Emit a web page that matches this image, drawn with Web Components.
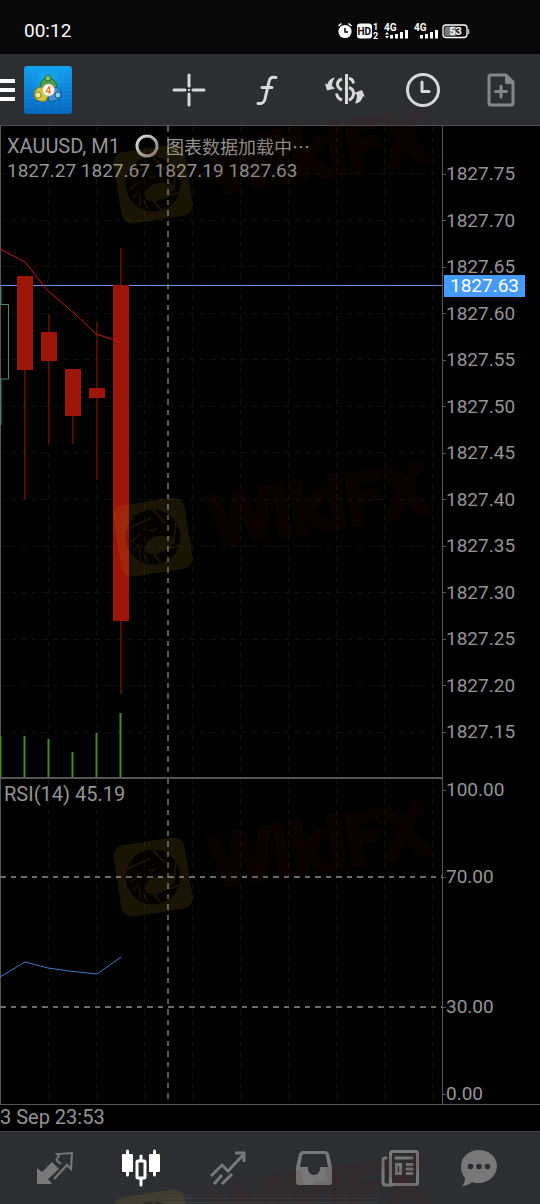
<!DOCTYPE html>
<html lang="zh-CN">
<head>
<meta charset="utf-8">
<meta name="viewport" content="width=device-width, initial-scale=1">
<title>XAUUSD, M1</title>
<style>
  body {
    margin: 0;
    background: #000;
    color: #949494;
    font-family: Roboto, "Noto Sans CJK SC", sans-serif;
    font-size: 19px;
    line-height: 20px;
  }
</style>
</head>
<body>
<trade-app>
  <phone-status slot="status" time="00:12" battery="53"></phone-status>
  <chart-toolbar slot="toolbar"></chart-toolbar>
  <price-chart slot="chart" time="3 Sep 23:53">
    <span slot="symbol">XAUUSD, M1</span>
    <span slot="loading">图表数据加载中…</span>
    <span slot="ohlc">1827.27 1827.67 1827.19 1827.63</span>
    <span slot="rsi">RSI(14) 45.19</span>
  </price-chart>
  <tab-bar slot="tabs"></tab-bar>
  <wiki-mark slot="marks" y="184"></wiki-mark>
  <wiki-mark slot="marks" y="537"></wiki-mark>
  <wiki-mark slot="marks" y="877"></wiki-mark>
  <wiki-mark slot="marks" y="1229"></wiki-mark>
</trade-app>

<script>
class TradeApp extends HTMLElement {
  connectedCallback() {
    this.attachShadow({ mode: 'open' });
    this.shadowRoot.innerHTML = `
      <style>
        :host {
          display: flex;
          flex-direction: column;
          position: relative;
          height: 100vh;
          overflow: hidden;
        }
        .overlay {
          position: absolute;
          inset: 0;
          overflow: hidden;
          pointer-events: none;
        }
      </style>
      <slot name="status"></slot>
      <slot name="toolbar"></slot>
      <slot name="chart"></slot>
      <slot name="tabs"></slot>
      <div class="overlay"><slot name="marks"></slot></div>
    `;
  }
}

class PhoneStatus extends HTMLElement {
  connectedCallback() {
    this.attachShadow({ mode: 'open' });
    this.shadowRoot.innerHTML = `
      <style>
        :host {
          display: flex;
          justify-content: space-between;
          align-items: center;
          box-sizing: border-box;
          height: 54px;
          padding: 8px 68px 0 24px;
          background: #080808;
          color: #fff;
        }
        .icons { display: flex; align-items: center; }
        svg { display: block; fill: #fff; }
        text { font-family: Roboto, sans-serif; font-weight: 700; }
      </style>
      <time>${this.getAttribute('time')}</time>
      <div class="icons">
        <svg width="134" height="18" viewBox="0 0 134 18">
          <!-- alarm -->
          <circle cx="7" cy="9.500" r="6.600"/>
          <path d="M.5 4 3.500 1.500M13.500 4 10.500 1.500" stroke="#fff" stroke-width="1.600"/>
          <path d="M7 6v4h3" fill="none" stroke="#080808" stroke-width="1.500"/>
          <!-- HD voice -->
          <rect x="19" y="1.500" width="15" height="15" rx="3"/>
          <text x="19.500" y="13" font-size="10" fill="#080808">HD</text>
          <text x="35" y="8" font-size="9">1</text>
          <text x="35" y="17" font-size="9">2</text>
          <!-- sim 1 -->
          <text x="46" y="9" font-size="10">4G</text>
          <path d="M47 12.500 49 10l2 2.500zM47 14 49 16.500 51 14z"/>
          <path d="M52 13h3v3.500h-3zM57 12h3v4.500h-3zM62 10h3v6.500h-3zM67 8h3v8.500h-3z"/>
          <!-- sim 2 -->
          <text x="76" y="9" font-size="10">4G</text>
          <path d="M82 13h3v3.500h-3zM87 12h3v4.500h-3zM92 10h3v6.500h-3zM97 8h3v8.500h-3z"/>
          <!-- battery -->
          <rect x="105" y="3" width="24" height="12.500" rx="3" fill="none" stroke="#fff" stroke-width="1.300"/>
          <rect x="106.500" y="4.500" width="12" height="9.500" rx="1.500" fill="#777"/>
          <path d="M130.500 7v5" stroke="#bbb" stroke-width="1.500"/>
          <text x="117.500" y="13" font-size="11" text-anchor="middle">${this.getAttribute('battery')}</text>
        </svg>
      </div>
    `;
  }
}

class ChartToolbar extends HTMLElement {
  connectedCallback() {
    this.attachShadow({ mode: 'open' });
    this.shadowRoot.innerHTML = `
      <style>
        :host {
          display: flex;
          align-items: center;
          height: 71px;
          background: #2d2e32;
          color: #d8d8d8;
        }
        button {
          display: flex;
          justify-content: center;
          align-items: center;
          width: 78px;
          height: 71px;
          padding: 0;
          border: 0;
          background: none;
          color: inherit;
        }
        button:disabled { color: #868686; }
        .menu { width: 24px; justify-content: flex-start; }
        .logo { width: 48px; margin-right: auto; }
        svg { display: block; fill: none; stroke: currentColor; stroke-width: 3; }
      </style>
      <button class="menu" aria-label="Menu">
        <svg width="15" height="22" viewBox="0 0 15 22" style="stroke:#fff;stroke-width:4"><path d="M0 2h15M0 11h15M0 20h15"/></svg>
      </button>
      <button class="logo" aria-label="Accounts">
        <svg width="48" height="48" viewBox="0 0 48 48" style="stroke-width:1">
          <defs>
            <linearGradient id="bg" x2="0" y2="1"><stop stop-color="#12a0ef"/><stop offset="1" stop-color="#0767bf"/></linearGradient>
            <radialGradient id="glow"><stop stop-color="#12c4f8" stop-opacity=".8"/><stop offset="1" stop-color="#12a0ef" stop-opacity="0"/></radialGradient>
          </defs>
          <g stroke="none">
            <rect width="48" height="48" rx="3" fill="url(#bg)"/>
            <circle cx="24" cy="15" r="17" fill="url(#glow)"/>
          </g>
          <path d="M8 0v48M16 0v48M24 0v48M32 0v48M40 0v48M0 8h48M0 16h48M0 24h48M0 32h48M0 40h48" stroke="#fff" stroke-opacity=".04"/>
          <path d="M16 22c0-6 3-10 8-10s9 4 9 10l-4 4H18z" fill="#4f9f48" stroke="#266b37"/>
          <circle cx="24" cy="12" r="3" fill="#7cc262" stroke="#266b37"/>
          <path d="M16 21c-4 1-6 5-6 9 2 5 7 6 12 5l2-5-4-8z" fill="#d3c23c" stroke="#7f7a27"/>
          <circle cx="14" cy="29" r="3" fill="#f3ed96" stroke="#8d8527"/>
          <path d="M32 21c4 2 6 6 5 10-3 4-9 5-13 4l1-7z" fill="#3f8fd0" stroke="#145993"/>
          <circle cx="34" cy="29" r="3" fill="#8bcdf0" stroke="#145993"/>
          <circle cx="24.500" cy="24" r="6" fill="#fff" stroke="#c8bfa4"/>
          <text x="24.500" y="28" text-anchor="middle" stroke="none" fill="#ef7e2c" font-family="Roboto, sans-serif" font-weight="700" font-size="11">4</text>
        </svg>
      </button>
      <button aria-label="Crosshair">
        <svg width="34" height="34" viewBox="0 0 34 34" stroke-linecap="round"><path d="M17 2v11M17 21v11M2 17h11M21 17h11"/><path d="M16 17h2" stroke-linecap="butt" style="stroke-width:2"/></svg>
      </button>
      <button aria-label="Indicators">
        <svg width="24" height="34" viewBox="0 0 24 34" stroke-linecap="round"><path d="M21 4.500c-4-1-6 0-7 4L10 26c-1 4-3 5-7 4.500M7 14.500h10"/></svg>
      </button>
      <button aria-label="Symbols">
        <svg width="42" height="34" viewBox="0 0 42 34">
          <path d="M22.500 1v30"/>
          <path d="M18 6c-6 2-6 8 0 11M12.500 20.500c1 4 2 5 5.500 6.500M25 5.500c2 0 4 2 4.500 5M25 14.500c6 2 6 10 0 12.500"/>
          <path d="M11 4.500C7 5 4 8 3.500 11.500L1 10.500 3 17.500l8-2-3-2.500c0-3 1-6 3-8.500zM31 30.500c4 0 7-3 8-7.500l2 1-3-7-8 3 3 2c0 3-1 6-2 8.500z" fill="currentColor" stroke="none"/>
        </svg>
      </button>
      <button aria-label="Timeframe">
        <svg width="34" height="34" viewBox="0 0 34 34"><circle cx="17" cy="17" r="15.500"/><path d="M16 9v9.500h7" stroke-linejoin="round" stroke-linecap="round"/></svg>
      </button>
      <button disabled aria-label="New order">
        <svg width="28" height="34" viewBox="0 0 28 34"><path d="M4 2h15l7 7v21a2 2 0 0 1-2 2H4a2 2 0 0 1-2-2V4a2 2 0 0 1 2-2z" stroke-linejoin="round"/><path d="M18 2v7a2 2 0 0 0 2 2h7z" fill="currentColor" stroke="none"/><path d="M14 13v11M8.500 18.500h11" stroke-linecap="round"/></svg>
      </button>
    `;
  }
}

class PriceChart extends HTMLElement {
  constructor() {
    super();
    this.prices = ['1827.75', '1827.70', '1827.65', '1827.60', '1827.55', '1827.50', '1827.45',
      '1827.40', '1827.35', '1827.30', '1827.25', '1827.20', '1827.15'];
    // x, wick top, body top, body bottom, wick bottom
    this.candles = [
      [25, 150, 150, 244, 374],
      [49, 188, 206, 235, 318],
      [73, 243, 243, 290, 318],
      [97, 196, 262, 272, 354],
      [121, 122, 159, 495, 568]
    ];
    this.volumes = [[1, 610], [25, 610], [49, 613], [73, 626], [97, 607], [121, 587]];
  }

  verticals(height) {
    let out = '';
    for (let x = 48; x < 442; x += 48) {
      out += `<path class="grid" d="M${x + 0.5} 0V${height}"/>`;
    }
    return `${out}<path class="period" d="M168 0V${height}"/>`;
  }

  connectedCallback() {
    const rows = this.prices.map((p, i) => `<path class="grid" d="M0 ${Math.round(47 + i * 46.58) + 0.5}H442"/>`).join('');
    const candles = this.candles.map(([x, high, top, bottom, low]) => `
      <path class="wick" d="M${x} ${high}V${low}"/>
      <rect class="body" x="${x - 8}" y="${top}" width="16" height="${bottom - top}"/>`).join('');
    const volumes = this.volumes.map(([x, top]) => `<path class="volume" d="M${x - 0.5} ${top}V652"/>`).join('');

    this.attachShadow({ mode: 'open' });
    this.shadowRoot.innerHTML = `
      <style>
        :host {
          display: flex;
          flex-direction: column;
          flex: 1;
          min-height: 0;
          border-top: 1px solid #505052;
          background: #000;
        }
        .pane {
          display: flex;
          position: relative;
          flex: 2 1 0;
          min-height: 0;
        }
        .pane.rsi { flex-grow: 1; }
        .plot {
          display: block;
          flex: 1;
          min-width: 0;
          height: 100%;
          fill: none;
        }
        .axis {
          display: flex;
          flex-direction: column;
          justify-content: space-between;
          box-sizing: border-box;
          width: 98px;
          margin: 0;
          padding: 38px 0 36px;
          border-left: 1px solid #555;
          list-style: none;
        }
        .rsi .axis { padding: 2px 0 0; }
        .axis li { display: flex; align-items: center; height: 20px; }
        .axis li::before { content: ""; width: 3px; height: 1px; background: #555; }
        .axis .gap { flex: 67 1 0; height: auto; }
        .axis .gap.wide { flex-grow: 110; }
        .axis .gap::before { content: none; }
        .legend {
          position: absolute;
          top: 8px;
          left: 7px;
          line-height: 25px;
        }
        .rsi .legend { top: 4px; left: 4px; font-size: 20px; }
        .row { display: flex; align-items: center; height: 24px; font-size: 20px; }
        .row svg { margin: 0 7px 0 15px; }
        .loading { font-size: 18px; font-family: "Noto Sans CJK SC", sans-serif; }
        .price {
          position: absolute;
          top: calc(24.5% - 11px);
          right: 15px;
          width: 81px;
          height: 22px;
          line-height: 22px;
          background: #459bfb;
          color: #fff;
          text-align: center;
        }
        .times { padding: 3px 0 4px; border-top: 1px solid #555; font-size: 20px; line-height: 19px; }
        .grid { stroke: #101010; stroke-dasharray: 6 5 5 5; }
        .period { stroke: #585858; stroke-width: 2; stroke-dasharray: 6 5 5 5; }
        .level { stroke: #6c6c6c; stroke-width: 2; stroke-dasharray: 6 5 5 5; }
        .edge { stroke: #555; stroke-width: 2; }
        .wick { stroke: #4a0f08; stroke-width: 2; }
        .body { fill: #9c1506; }
        .volume { stroke: #4b8a20; stroke-width: 2; }
        .bull { stroke: #4f8a68; stroke-width: 1; }
        .average { stroke: #c41a10; }
        .current { stroke: #6a8fe6; }
        .line { stroke: #3f7cc8; }
      </style>
      <div class="pane">
        <svg class="plot" viewBox="0 0 442 652" preserveAspectRatio="none">
          ${rows}
          ${this.verticals(652)}
          <path class="edge" d="M0 0V652" />
          <path class="current" d="M0 159.500H442"/>
          <path class="bull" d="M1 159V178M1 253V299"/>
          <path class="bull" d="M0 178.500H8.500V253H0"/>
          ${candles}
          ${volumes}
          <path class="average" d="M0 123 25 136 48 165 74 187 96 208 121 216"/>
          <path class="edge" d="M0 652H442"/>
        </svg>
        <ul class="axis">${this.prices.map(p => `<li>${p}</li>`).join('')}</ul>
        <div class="legend">
          <div class="row">
            <slot name="symbol"></slot>
            <svg width="24" height="24" viewBox="0 0 24 24" fill="none" stroke-width="3">
              <defs><linearGradient id="spin" x2="1" y2="1"><stop stop-color="#ddd"/><stop offset="1" stop-color="#777"/></linearGradient></defs>
              <circle cx="12" cy="12" r="10" stroke="url(#spin)"/>
            </svg>
            <span class="loading"><slot name="loading"></slot></span>
          </div>
          <slot name="ohlc"></slot>
        </div>
        <div class="price">1827.63</div>
      </div>
      <div class="pane rsi">
        <svg class="plot" viewBox="0 0 442 326" preserveAspectRatio="none">
          ${this.verticals(326)}
          <path class="edge" d="M0 0V326M0 0H442"/>
          <path class="level" d="M0 99H442M0 229H442"/>
          <path class="line" d="M0 199 25 184 48 190 73 193.500 97 196 121 179"/>
        </svg>
        <ul class="axis">
          <li>100.00</li>
          <li class="gap" role="presentation"></li>
          <li>70.00</li>
          <li class="gap wide" role="presentation"></li>
          <li>30.00</li>
          <li class="gap" role="presentation"></li>
          <li>0.00</li>
        </ul>
        <div class="legend"><slot name="rsi"></slot></div>
      </div>
      <div class="times">${this.getAttribute('time')}</div>
    `;
  }
}

class TabBar extends HTMLElement {
  connectedCallback() {
    this.attachShadow({ mode: 'open' });
    this.shadowRoot.innerHTML = `
      <style>
        :host {
          display: block;
          position: relative;
          border-top: 1px solid #404143;
          background: #2d2e32;
          color: #787878;
        }
        nav {
          display: grid;
          grid-template-columns: repeat(5, 6fr) 5fr;
          padding: 0 25px 0 12px;
        }
        a {
          display: flex;
          justify-content: center;
          align-items: center;
          height: 72px;
          color: inherit;
        }
        a[aria-current] { color: #fff; }
        svg { display: block; fill: none; stroke: currentColor; stroke-width: 3; }
        .solid { fill: currentColor; stroke: none; }
        .cut { fill: #2d2e32; stroke: none; }
        .home {
          position: absolute;
          left: 30%;
          right: 30%;
          bottom: 1px;
          height: 3px;
          border: 1px solid #3a3b3e;
          border-radius: 3px;
        }
      </style>
      <nav>
        <a href="#quotes" aria-label="Quotes">
          <svg width="38" height="34" viewBox="0 0 38 34">
            <path class="solid" d="M1 17 6 21 16 11 23 18 12 28 16 33H1z"/>
            <path d="M20 9 23 5 21 3 36 2 35 18 31 14 18 28" style="stroke-width:2"/>
            <path d="M20 9 25 13" style="stroke-width:2"/>
          </svg>
        </a>
        <a href="#chart" aria-label="Chart" aria-current="page">
          <svg width="38" height="38" viewBox="0 0 38 38" stroke-linecap="round">
            <rect class="solid" y="5" width="11" height="18" rx="1"/><path d="M5.500 2v24"/>
            <rect class="solid" x="27" y="5" width="11" height="18" rx="1"/><path d="M32.500 2v24"/>
            <rect x="15" y="12" width="8" height="17" rx="1"/><path d="M19 7v4M19 30v6"/>
          </svg>
        </a>
        <a href="#trade" aria-label="Trade">
          <svg width="36" height="34" viewBox="0 0 36 34"><path d="M1 25 12 14l6 6L34 3M25 2h9v9M4 33 12 24M12 33 22 23"/></svg>
        </a>
        <a href="#history" aria-label="History">
          <svg width="36" height="34" viewBox="0 0 36 34">
            <path class="solid" d="M7 0h22c2 0 3 1 4 3l3 13v15c0 2-1 3-3 3H3c-2 0-3-1-3-3V16L3 3c1-2 2-3 4-3z"/>
            <path class="cut" d="M8 3h20c1 0 2 1 2 2l2 11h-8v2a6 6 0 0 1-12 0v-2H4L6 5c0-1 1-2 2-2z"/>
          </svg>
        </a>
        <a href="#news" aria-label="News">
          <svg width="38" height="38" viewBox="0 0 38 38" stroke-linecap="round">
            <rect x="9.500" y="2.500" width="27" height="33" rx="2"/>
            <path d="M5 9H4a2 2 0 0 0-2 2v22c0 2 1 3 3 3h6M15 9h16M26 15.500h5M26 20h5M26 24.500h5"/>
            <rect x="15.500" y="15.500" width="4" height="9"/>
          </svg>
        </a>
        <a href="#chat" aria-label="Messages">
          <svg width="36" height="38" viewBox="0 0 36 38">
            <path class="solid" d="M18 1c10 0 18 7 18 16s-8 17-18 17c-2 0-5 0-7-1-2 2-6 4-10 4 2-2 3-5 3-8-3-3-4-7-4-12C0 8 8 1 18 1z"/>
            <circle class="cut" cx="9.500" cy="17.500" r="2.800"/><circle class="cut" cx="18" cy="17.500" r="2.800"/><circle class="cut" cx="26.500" cy="17.500" r="2.800"/>
          </svg>
        </a>
      </nav>
      <div class="home"></div>
    `;
  }
}

// faint tilted brand stamp, y is the centre of its badge
class WikiMark extends HTMLElement {
  connectedCallback() {
    this.attachShadow({ mode: 'open' });
    this.shadowRoot.innerHTML = `
      <style>
        :host {
          display: block;
          position: absolute;
          left: 103px;
          top: ${this.getAttribute('y') - 100}px;
        }
        svg { display: block; }
        text {
          font: 400 65px "DejaVu Sans", sans-serif;
          fill: #4e160a;
          stroke: #4e160a;
          stroke-width: 8px;
          stroke-linejoin: round;
        }
      </style>
      <svg width="360" height="200" viewBox="-50 -100 360 200">
        <g transform="rotate(-9)">
          <g opacity=".13">
            <rect x="-36" y="-36" width="72" height="72" rx="11" fill="#be9a1e"/>
            <circle r="27.500" fill="#2a0c06"/>
            <path d="M-25-12 1-19M4-27 14-12M25-11 19 10M26 12-2 17M-2 17 4 27" stroke="#be9a1e" stroke-width="2"/>
            <path d="M13 2C8-2-3-1-8 6c-4 6-2 10 6 11l17-3 5-8-2-5z" fill="#be9a1e"/>
            <path d="M-24 2l12-7M-22 11l7-6M-16 20l1-12M-9 24l-3-10M-4-8l5 2 4-2" stroke="#be9a1e" stroke-width="1.500" fill="none"/>
          </g>
          <g opacity=".12"><text x="59" y="18">WikiFX</text></g>
        </g>
      </svg>
    `;
  }
}

customElements.define('trade-app', TradeApp);
customElements.define('phone-status', PhoneStatus);
customElements.define('chart-toolbar', ChartToolbar);
customElements.define('price-chart', PriceChart);
customElements.define('tab-bar', TabBar);
customElements.define('wiki-mark', WikiMark);
</script>
</body>
</html>
